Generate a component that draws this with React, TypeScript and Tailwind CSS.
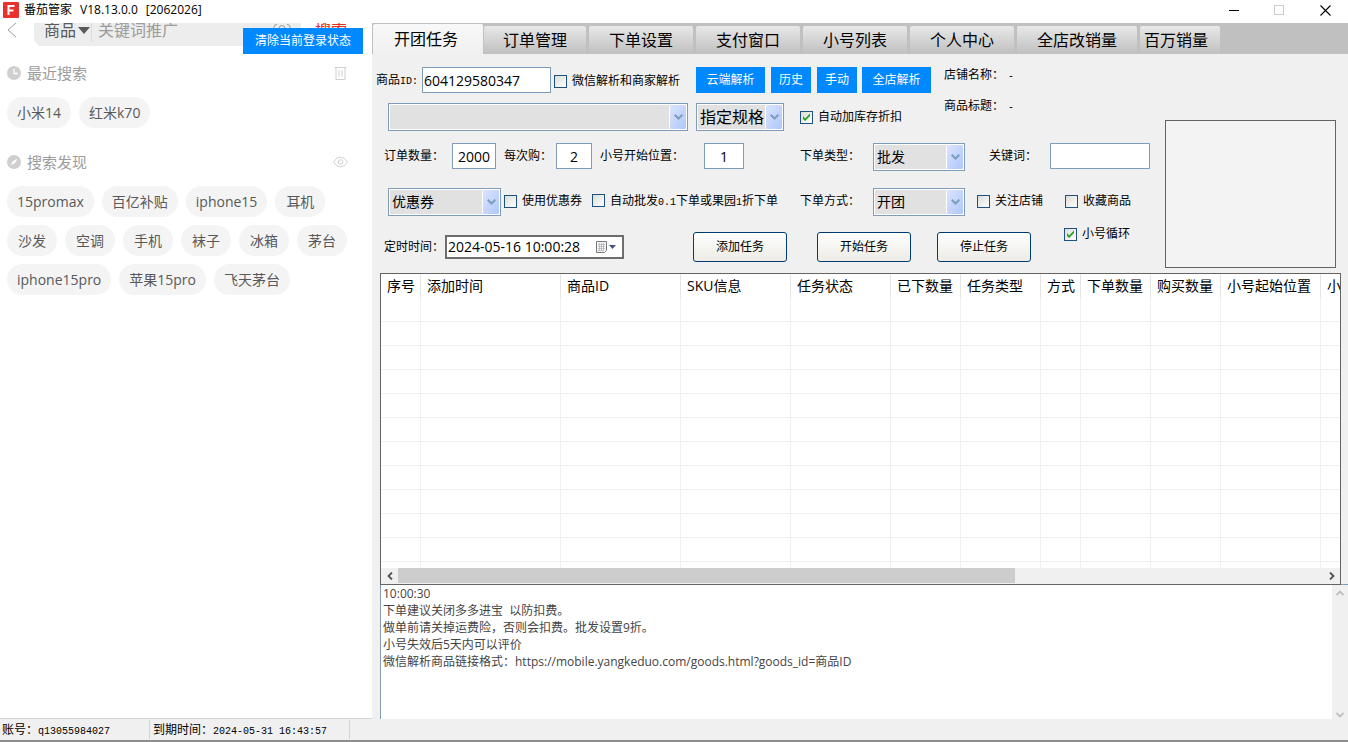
import type { ReactNode } from "react";

const recent = ["小米14", "红米k70"];

const discover = [
  "15promax",
  "百亿补贴",
  "iphone15",
  "耳机",
  "沙发",
  "空调",
  "手机",
  "袜子",
  "冰箱",
  "茅台",
  "iphone15pro",
  "苹果15pro",
  "飞天茅台",
];

const tabs = [
  { name: "订单管理", width: "w-[102px]" },
  { name: "下单设置", width: "w-[104px]" },
  { name: "支付窗口", width: "w-[104px]" },
  { name: "小号列表", width: "w-[104px]" },
  { name: "个人中心", width: "w-[104px]" },
  { name: "全店改销量", width: "w-[120px]" },
  { name: "百万销量", width: "w-[80px] pr-2" },
];

const columns = [
  { name: "序号", width: "w-[40px]" },
  { name: "添加时间", width: "w-[140px]" },
  { name: "商品ID", width: "w-[120px]" },
  { name: "SKU信息", width: "w-[110px]" },
  { name: "任务状态", width: "w-[100px]" },
  { name: "已下数量", width: "w-[70px]" },
  { name: "任务类型", width: "w-[80px]" },
  { name: "方式", width: "w-[40px]" },
  { name: "下单数量", width: "w-[70px]" },
  { name: "购买数量", width: "w-[70px]" },
  { name: "小号起始位置", width: "w-[100px]" },
  { name: "小号结束位置", width: "w-[100px]" },
];

const logText = `10:00:30
下单建议关闭多多进宝  以防扣费。
做单前请关掉运费险，否则会扣费。批发设置9折。
小号失效后5天内可以评价
微信解析商品链接格式：https://mobile.yangkeduo.com/goods.html?goods_id=商品ID`;

function Mono({ children }: { children: ReactNode }) {
  return <span className="font-['Liberation_Mono',monospace] text-[10px]">{children}</span>;
}

function Check({
  children,
  checked = false,
  className = "",
}: {
  children: ReactNode;
  checked?: boolean;
  className?: string;
}) {
  return (
    <label className={`flex shrink-0 items-center gap-[5px] whitespace-nowrap ${className}`}>
      <span className="relative block size-[13px]">
        <input
          type="checkbox"
          defaultChecked={checked}
          className="peer block size-[13px] appearance-none border border-[#1c5180] bg-linear-to-br from-[#dcdcd7] to-white"
        />
        <svg
          viewBox="0 0 13 13"
          className="pointer-events-none absolute inset-0 hidden size-[13px] peer-checked:block"
        >
          <path d="M3 5v3l2 2 5-5V2.500L5 7.500z" fill="#21a121" />
        </svg>
      </span>
      <span>{children}</span>
    </label>
  );
}

function Combo({
  label,
  options,
  className = "",
  textClass = "text-sm",
}: {
  label: string;
  options: string[];
  className?: string;
  textClass?: string;
}) {
  return (
    <div className={`relative h-7 shrink-0 border border-[#7f9db9] bg-white p-px ${className}`}>
      <select
        aria-label={label}
        className={`block size-full appearance-none bg-[#e1e1e1] pl-[2px] outline-none ${textClass}`}
      >
        {options.map((o) => (
          <option key={o}>{o}</option>
        ))}
      </select>
      <span className="pointer-events-none absolute inset-y-px right-px flex w-[17px] items-center justify-center rounded-xs border-l border-white bg-linear-to-br from-[#dbe4fd] to-[#afc7fa]">
        <svg viewBox="0 0 9 6" className="h-[6px] w-[9px]">
          <path d="M.7.7l3.800 3.800L8.300.7" fill="none" stroke="#7b9ebd" strokeWidth="2" />
        </svg>
      </span>
    </div>
  );
}

function Field({
  id,
  value = "",
  className = "",
}: {
  id: string;
  value?: string;
  className?: string;
}) {
  return (
    <input
      id={id}
      type="text"
      defaultValue={value}
      className={`h-[26px] shrink-0 border border-[#7f9db9] bg-white text-sm outline-none ${className}`}
    />
  );
}

function BlueButton({ children, className = "" }: { children: ReactNode; className?: string }) {
  return (
    <button
      type="button"
      className={`h-[26px] shrink-0 bg-[#0088ff] text-xs whitespace-nowrap text-white ${className}`}
    >
      {children}
    </button>
  );
}

function TaskButton({ children, className = "" }: { children: ReactNode; className?: string }) {
  return (
    <button
      type="button"
      className={`h-[30px] w-[94px] shrink-0 rounded-[3px] border border-[#003c74] bg-linear-to-b from-white to-[#ecebe5] ${className}`}
    >
      {children}
    </button>
  );
}

function Chips({ items }: { items: string[] }) {
  return (
    <div className="flex flex-wrap gap-2">
      {items.map((item) => (
        <button
          key={item}
          type="button"
          className="h-[31px] min-w-[50px] rounded-full bg-[#f4f4f4] px-[10px] text-sm text-[#58595b]"
        >
          {item}
        </button>
      ))}
    </div>
  );
}

function TitleBar() {
  return (
    <header className="flex h-[23px] shrink-0 items-start justify-between bg-white">
      <div className="flex h-5 items-center pl-[3px]">
        <svg viewBox="0 0 16 16" className="size-4">
          <rect width="16" height="16" rx="1" fill="#e8322b" />
          <path d="M5.500 13V4H11.500M5.500 8.500H10.500" fill="none" stroke="#fff" strokeWidth="2" />
        </svg>
        <h1 className="ml-[5px] flex gap-2 text-xs whitespace-nowrap">
          <span>番茄管家</span>
          <span>V18.13.0.0</span>
          <span>[2062026]</span>
        </h1>
      </div>
      <div className="flex h-5 items-center gap-[35px] pr-[17px]">
        <button type="button" aria-label="最小化">
          <svg viewBox="0 0 11 11" className="size-[11px]">
            <path d="M1 5.500h10" stroke="#000" />
          </svg>
        </button>
        <button type="button" aria-label="最大化">
          <svg viewBox="0 0 11 11" className="size-[11px]">
            <rect x=".5" y=".5" width="9" height="9" fill="none" stroke="#ccc" />
          </svg>
        </button>
        <button type="button" aria-label="关闭">
          <svg viewBox="0 0 11 11" className="size-[11px]">
            <path d="M.5.5l10 10M10.500.5l-10 10" stroke="#000" strokeWidth="1.100" />
          </svg>
        </button>
      </div>
    </header>
  );
}

function Sidebar() {
  return (
    <aside className="relative flex w-[372px] shrink-0 flex-col overflow-hidden border-b border-[#d4d4d4] bg-white pl-[7px]">
      {/* Search bar, scrolled partly under the title bar */}
      <div className="-mt-[9px] flex h-8 shrink-0 items-center text-[#58595b]">
        <svg viewBox="0 0 10 16" className="h-4 w-[10px]">
          <path d="M9 1L1 8l8 7" fill="none" stroke="#9c9c9c" />
        </svg>
        <div className="ml-[17px] flex h-8 w-[267px] items-center rounded-lg bg-[#ededed] pl-[10px]">
          <span className="text-base">商品</span>
          <svg viewBox="0 0 12 7" className="ml-[2px] h-[7px] w-3">
            <path d="M0 0h12L6 7z" fill="#58595b" />
          </svg>
          <input
            aria-label="搜索商品"
            placeholder="关键词推广"
            className="ml-px h-6 w-[170px] border-l border-[#dcdcdc] pl-[6px] text-base outline-none placeholder:text-[#9c9c9c]"
          />
          <svg viewBox="0 0 18 14" className="ml-3 h-[14px] w-[18px]" fill="none" stroke="#9c9c9c">
            <path d="M4.500 12.500H3Q1 12.500 1 10V4Q1 1.500 4 1.500M13.500 12.500H15Q17 12.500 17 10V4Q17 1.500 14 1.500" />
            <path d="M6 8V5.500Q6 2.500 9 2.500T12 5.500V8" />
            <circle cx="9" cy="8" r="2.500" />
          </svg>
        </div>
        <button type="button" className="ml-[14px] text-base text-[#e02e24]">
          搜索
        </button>
      </div>

      <div className="mt-[15px] mr-6 flex h-6 items-center gap-[6px]">
        <svg viewBox="0 0 14 14" className="size-[14px]">
          <circle cx="7" cy="7" r="7" fill="#cfcfcf" />
          <path d="M7 3v4.500h4" fill="none" stroke="#fff" strokeWidth="1.300" />
        </svg>
        <h2 className="flex-1 text-[15px] text-[#9c9c9c]">最近搜索</h2>
        <button type="button" aria-label="清空最近搜索" className="px-px">
          <svg viewBox="0 0 13 14" className="h-[14px] w-[13px]" fill="none" stroke="#cfcfcf">
            <path d="M.5 1.500h12M2 1.500v12h9v-12M5 4v6.500M8 4v6.500" />
          </svg>
        </button>
      </div>
      <div className="mt-3">
        <Chips items={recent} />
      </div>

      <div className="mt-[22px] mr-6 flex h-6 items-center gap-[6px]">
        <svg viewBox="0 0 14 14" className="size-[14px]">
          <circle cx="7" cy="7" r="7" fill="#cfcfcf" />
          <path d="M10.500 3.500L8 8l-4.500 2.500L6 6z" fill="#fff" />
        </svg>
        <h2 className="flex-1 text-[15px] text-[#9c9c9c]">搜索发现</h2>
        <button type="button" aria-label="隐藏搜索发现">
          <svg viewBox="0 0 15 12" className="h-3 w-[15px]" fill="none" stroke="#cfcfcf">
            <path d="M.5 6Q3.500 1 7.500 1T14.500 6Q11.500 11 7.500 11T.5 6z" />
            <circle cx="7.500" cy="6" r="2.300" />
          </svg>
        </button>
      </div>
      <div className="mt-3 mr-[22px]">
        <Chips items={discover} />
      </div>

      <BlueButton className="absolute top-[5px] right-[9px] w-[120px]">清除当前登录状态</BlueButton>
    </aside>
  );
}

function Tabs() {
  return (
    <nav className="flex h-[31px] shrink-0 items-end gap-[3px] bg-[#c0c0c0] pl-px text-base">
      <button type="button" className="-mr-[2px] h-[30px] w-[110px] rounded-t-xs bg-linear-to-b from-[#f8f8f8] to-[#f0f0f0] pr-1">
        开团任务
      </button>
      {tabs.map((tab) => (
        <button
          key={tab.name}
          type="button"
          className={`h-[28px] shrink-0 rounded-t-xs bg-linear-to-b from-[#e8e8e8] to-[#c0c0c0] whitespace-nowrap ${tab.width}`}
        >
          {tab.name}
        </button>
      ))}
    </nav>
  );
}

function TaskForm() {
  return (
    <form className="flex h-[219px] shrink-0 text-xs whitespace-nowrap">
      <div className="flex min-w-0 flex-1 flex-col pt-[13px]">
        <div className="flex">
          <div className="w-[559px] shrink-0">
            <div className="flex h-[26px] items-center">
              <label htmlFor="goods-id" className="w-[50px] shrink-0 pl-1">
                商品<Mono>ID:</Mono>
              </label>
              <Field id="goods-id" value="604129580347" className="w-[129px] pl-px" />
              <Check className="ml-[3px] w-[142px] pt-[2px]">微信解析和商家解析</Check>
              <BlueButton className="w-[69px]">云端解析</BlueButton>
              <BlueButton className="ml-[6px] w-10">历史</BlueButton>
              <BlueButton className="ml-[6px] w-10">手动</BlueButton>
              <BlueButton className="ml-[5px] w-[69px]">全店解析</BlueButton>
            </div>
            <div className="mt-[10px] flex h-7 items-center">
              <Combo label="商品规格" options={[""]} className="ml-4 w-[300px]" />
              <Combo label="规格方式" options={["指定规格"]} className="ml-2 w-[88px]" textClass="text-base" />
              <Check checked className="ml-4">
                自动加库存折扣
              </Check>
            </div>
          </div>
          <dl className="ml-[13px] grid grid-cols-[auto_auto] content-start gap-x-1 gap-y-[13px] leading-4">
            <dt>店铺名称：</dt>
            <dd>
              <Mono>-</Mono>
            </dd>
            <dt>商品标题：</dt>
            <dd>
              <Mono>-</Mono>
            </dd>
          </dl>
        </div>

        <div className="mt-3 flex h-[26px] items-center">
          <label htmlFor="order-count" className="w-20 shrink-0 pl-3">
            订单数量：
          </label>
          <Field id="order-count" value="2000" className="w-11 text-center" />
          <label htmlFor="per-buy" className="w-[60px] shrink-0 pl-2">
            每次购：
          </label>
          <Field id="per-buy" value="2" className="w-9 text-center" />
          <label htmlFor="start-pos" className="w-28 shrink-0 pl-2">
            小号开始位置：
          </label>
          <Field id="start-pos" value="1" className="w-10 text-center" />
          <span className="ml-14 w-[73px] shrink-0">下单类型：</span>
          <Combo label="下单类型" options={["批发"]} className="w-[92px] self-start" />
          <label htmlFor="keyword" className="w-[85px] shrink-0 pl-6">
            关键词：
          </label>
          <Field id="keyword" className="w-[100px] px-1" />
        </div>

        <div className="mt-[19px] flex h-7 items-center">
          <Combo label="优惠券" options={["优惠券"]} className="ml-4 w-[113px]" />
          <Check className="ml-[3px] w-[88px] pb-[2px]">使用优惠券</Check>
          <Check className="w-[208px] pb-[2px]">
            自动批发<Mono>0.1</Mono>下单或果园<Mono>1</Mono>折下单
          </Check>
          <span className="w-[73px] shrink-0 pb-[2px]">下单方式：</span>
          <Combo label="下单方式" options={["开团"]} className="w-[92px]" />
          <Check className="ml-3 w-[88px] pb-[2px]">关注店铺</Check>
          <Check className="pb-[2px]">收藏商品</Check>
        </div>

        <div className="mt-4 flex h-[30px] items-center">
          <label htmlFor="schedule" className="w-[73px] shrink-0 pl-3">
            定时时间：
          </label>
          <div className="flex h-6 w-[179px] shrink-0 items-center border-2 border-[#6d6d6d] bg-white">
            <input
              id="schedule"
              type="text"
              defaultValue="2024-05-16 10:00:28"
              className="h-5 w-[148px] pl-px text-sm outline-none"
            />
            <button type="button" aria-label="选择日期">
              <svg viewBox="0 0 22 14" className="h-[14px] w-[22px]">
                <path d="M1.500 1.500h10v9l-2 2h-8z" fill="#f4f4f4" stroke="#777" />
                <path d="M3 4.500h7M3 6.500h7M3 8.500h7M3 10.500h5M4.500 3v8M6.500 3v8M8.500 3v8" stroke="#a9b2bd" strokeWidth=".7" />
                <path d="M14 5h7l-3.500 4z" fill="#44557f" />
              </svg>
            </button>
          </div>
          <TaskButton className="ml-[69px]">添加任务</TaskButton>
          <TaskButton className="ml-[30px]">开始任务</TaskButton>
          <TaskButton className="ml-[26px]">停止任务</TaskButton>
          <Check checked className="ml-[33px] h-4 self-start -mt-[6px] leading-4">
            小号循环
          </Check>
        </div>
      </div>
      <div className="mr-3 mb-[5px] h-[148px] w-[171px] shrink-0 self-end border border-[#646464] bg-[#f3f3f3]" />
    </form>
  );
}

function TaskTable() {
  return (
    <div className="flex min-h-0 flex-1 pl-2">
      <div className="flex min-w-0 flex-1 flex-col border border-[#646464] bg-white">
        <div className="min-h-0 flex-1 overflow-hidden">
          <table className="w-[1040px] table-fixed border-separate border-spacing-0 text-sm">
            <thead>
              <tr className="h-6">
                {columns.map((col) => (
                  <th
                    key={col.name}
                    scope="col"
                    className={`overflow-hidden border-r border-[#e5e5e5] p-0 pl-[6px] text-left leading-6 font-normal whitespace-nowrap ${col.width}`}
                  >
                    {col.name}
                  </th>
                ))}
              </tr>
            </thead>
            <tbody>
              {Array.from({ length: 12 }, (_, row) => (
                <tr key={row} className="h-6">
                  {columns.map((col) => (
                    <td key={col.name} className="border-r border-b border-[#f0f0f0] p-0" />
                  ))}
                </tr>
              ))}
            </tbody>
          </table>
        </div>
        <div className="flex h-4 shrink-0 items-center bg-[#f0f0f0]">
          <button type="button" aria-label="向左滚动" className="flex w-[17px] justify-center">
            <svg viewBox="0 0 6 8" className="h-2 w-[6px]">
              <path d="M5 .5L1.500 4 5 7.500" fill="none" stroke="#505050" strokeWidth="1.800" />
            </svg>
          </button>
          <div className="flex h-full flex-1">
            <div className="h-[15px] w-2/3 bg-[#cdcdcd]" />
          </div>
          <button type="button" aria-label="向右滚动" className="flex w-[17px] justify-center">
            <svg viewBox="0 0 6 8" className="h-2 w-[6px]">
              <path d="M1 .5L4.500 4 1 7.500" fill="none" stroke="#505050" strokeWidth="1.800" />
            </svg>
          </button>
        </div>
      </div>
      <div className="w-[7px] border-b border-[#7f9db9]" />
    </div>
  );
}

function LogPanel() {
  return (
    <div className="ml-2 flex h-[134px] shrink-0 border-l border-[#7f9db9] bg-white">
      <textarea
        aria-label="运行日志"
        readOnly
        defaultValue={logText}
        className="block flex-1 resize-none overflow-hidden pl-[2px] text-xs leading-[17px] text-[#444] outline-none"
      />
      <div className="flex w-4 flex-col items-center justify-between bg-[#f0f0f0] pt-[5px] pb-px">
        <svg viewBox="0 0 8 6" className="h-[6px] w-2">
          <path d="M.5 5L4 1.500 7.500 5" fill="none" stroke="#bfbfbf" strokeWidth="1.800" />
        </svg>
        <svg viewBox="0 0 8 6" className="h-[6px] w-2">
          <path d="M.5 1L4 4.500 7.500 1" fill="none" stroke="#bfbfbf" strokeWidth="1.800" />
        </svg>
      </div>
    </div>
  );
}

function StatusBar() {
  return (
    <footer className="flex h-[23px] shrink-0 items-center border-b-2 border-[#8c8c8c] text-xs whitespace-nowrap">
      <div className="h-[19px] w-[150px] border-r border-[#d4d4d4] pl-[2px] leading-[19px]">
        账号：<Mono>q13055984027</Mono>
      </div>
      <div className="h-[19px] w-[200px] border-r border-[#d4d4d4] pl-[3px] leading-[19px]">
        到期时间：<Mono>2024-05-31 16:43:57</Mono>
      </div>
    </footer>
  );
}

export default function App() {
  return (
    <div className="flex h-screen flex-col overflow-hidden bg-[#f0f0f0] font-['Open_Sans','Noto_Sans_CJK_SC',sans-serif] text-black">
      <TitleBar />
      <div className="flex min-h-0 flex-1">
        <Sidebar />
        <main className="flex min-w-0 flex-1 flex-col">
          <Tabs />
          <TaskForm />
          <TaskTable />
          <LogPanel />
        </main>
      </div>
      <StatusBar />
    </div>
  );
}
